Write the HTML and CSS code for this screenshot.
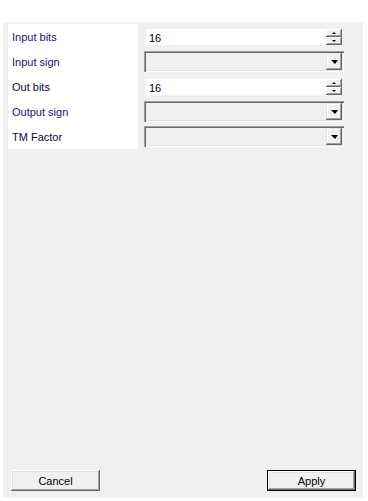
FILE: index.html
```html
<!DOCTYPE html>
<html>
<head>
<meta charset="utf-8">
<link rel="stylesheet" href="styles.css">
</head>
<body>
<div class="panel">
  <div class="form">
    <div class="labels">
      <div class="label navy">Input bits</div>
      <div class="label navy">Input sign</div>
      <div class="label dark">Out bits</div>
      <div class="label navy">Output sign</div>
      <div class="label dark">TM Factor</div>
    </div>
    <div class="controls">
      <div class="row">
        <div class="spin">
          <div class="spin-field">16</div>
          <div class="spin-btns">
            <div class="spin-btn"><span class="tri-up"></span></div>
            <div class="spin-btn"><span class="tri-down-s"></span></div>
          </div>
        </div>
      </div>
      <div class="row">
        <div class="combo"><div class="combo-btn"><span class="tri-down"></span></div></div>
      </div>
      <div class="row">
        <div class="spin">
          <div class="spin-field">16</div>
          <div class="spin-btns">
            <div class="spin-btn"><span class="tri-up"></span></div>
            <div class="spin-btn"><span class="tri-down-s"></span></div>
          </div>
        </div>
      </div>
      <div class="row">
        <div class="combo"><div class="combo-btn"><span class="tri-down"></span></div></div>
      </div>
      <div class="row">
        <div class="combo"><div class="combo-btn"><span class="tri-down"></span></div></div>
      </div>
    </div>
  </div>
  <div class="spacer"></div>
  <div class="footer">
    <div class="btn">Cancel</div>
    <div class="btn default">Apply</div>
  </div>
</div>
</body>
</html>
```
FILE: styles.css
```css
html, body {
  margin: 0;
  padding: 0;
  background: #ffffff;
}
body {
  font-family: "Liberation Sans", Arial, sans-serif;
  font-size: 11px;
  color: #000;
}
.panel {
  margin: 22px 0 0 3px;
  width: 360px;
  height: 476px;
  background: #f0f0f0;
  display: flex;
  flex-direction: column;
}
.form {
  display: flex;
  gap: 6px;
  margin: 2px 0 0 5px;
}
.labels {
  width: 130px;
  background: #ffffff;
  display: flex;
  flex-direction: column;
}
.label {
  height: 25px;
  box-sizing: border-box;
  padding-top: 1px;
  line-height: 24px;
  padding-left: 4px;
}
.label.navy { color: #15157a; }
.label.dark { color: #0a0a3a; }
.controls {
  width: 200px;
  display: flex;
  flex-direction: column;
}
.row {
  height: 25px;
  display: flex;
  align-items: center;
}
.spin {
  margin-left: 2px;
  width: 196px;
  height: 16px;
  display: flex;
  background: #ffffff;
}
.spin-field {
  flex: 1;
  line-height: 16px;
  padding-top: 1px;
  padding-left: 3px;
}
.spin-btns {
  width: 16px;
  display: flex;
  flex-direction: column;
}
.spin-btn {
  height: 8px;
  background: #f0f0f0;
  box-shadow: inset -1px -1px #696969, inset 1px 1px #ffffff, inset -2px -2px #a0a0a0;
  display: flex;
  align-items: center;
  justify-content: center;
}
.tri-up {
  width: 0; height: 0;
  border-left: 2px solid transparent;
  border-right: 2px solid transparent;
  border-bottom: 2px solid #000;
}
.tri-down-s {
  width: 0; height: 0;
  border-left: 2px solid transparent;
  border-right: 2px solid transparent;
  border-top: 2px solid #000;
}
.combo {
  width: 200px;
  height: 21px;
  box-sizing: border-box;
  background: #f0f0f0;
  box-shadow: inset 1px 1px #a0a0a0, inset 2px 2px #696969, inset -1px -1px #ffffff, inset -2px -2px #e3e3e3;
  display: flex;
  justify-content: flex-end;
  align-items: center;
  padding-right: 2px;
}
.combo-btn {
  width: 16px;
  height: 17px;
  background: #f0f0f0;
  box-shadow: inset -1px -1px #696969, inset 1px 1px #e3e3e3, inset -2px -2px #a0a0a0, inset 2px 2px #ffffff;
  display: flex;
  align-items: center;
  justify-content: center;
}
.tri-down {
  width: 0; height: 0;
  border-left: 4px solid transparent;
  border-right: 3px solid transparent;
  border-top: 4px solid #000;
}
.spacer { flex: 1; }
.footer {
  display: flex;
  justify-content: space-between;
  padding: 0 7px 7px 8px;
}
.btn {
  width: 89px;
  height: 21px;
  box-sizing: border-box;
  background: #f0f0f0;
  box-shadow: inset -1px -1px #696969, inset 1px 1px #ffffff, inset -2px -2px #a0a0a0, inset 2px 2px #e3e3e3;
  text-align: center;
  line-height: 22px;
}
.btn.default {
  border: 1px solid #000;
  line-height: 20px;
}
```
